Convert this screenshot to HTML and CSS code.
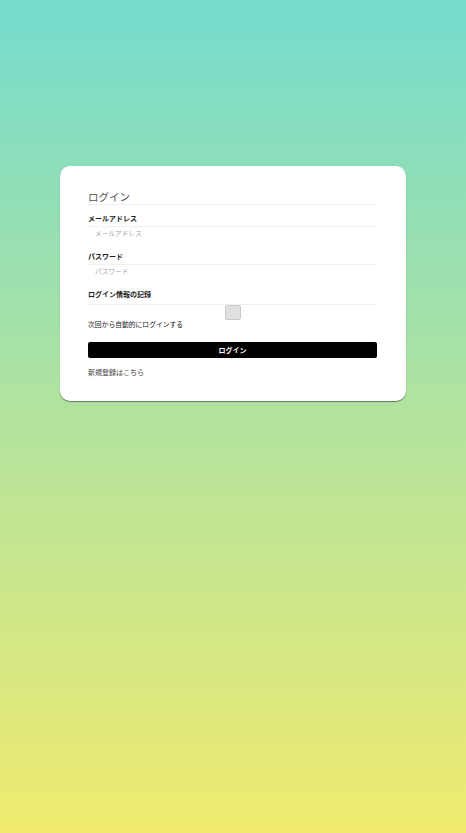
FILE: index.html
```html
<!DOCTYPE html>
<html lang="ja">
<head>
<meta charset="utf-8">
<title>ログイン</title>
<link rel="stylesheet" href="styles.css">
</head>
<body>
<main class="page">
  <form class="card">
    <h1 class="title">ログイン</h1>
    <label class="label" for="email">メールアドレス</label>
    <input class="field" id="email" type="email" placeholder="メールアドレス">
    <label class="label" for="password">パスワード</label>
    <input class="field" id="password" type="password" placeholder="パスワード">
    <div class="label label-remember">ログイン情報の記録</div>
    <div class="check-row"><input class="check" type="checkbox" id="remember"></div>
    <label class="check-text" for="remember">次回から自動的にログインする</label>
    <button class="btn" type="button">ログイン</button>
    <a class="link" href="#">新規登録はこちら</a>
  </form>
</main>
</body>
</html>
```

FILE: styles.css
```css
html, body {
  margin: 0;
  padding: 0;
}
body {
  min-height: 833px;
  background: linear-gradient(to bottom, #74dbcd 0%, #f0eb6f 100%);
  font-family: "Noto Sans CJK JP", "Noto Sans", sans-serif;
  color: #333;
}
.page {
  padding: 166px 60px 0 60px;
}
.card {
  display: flex;
  flex-direction: column;
  background: #fff;
  border-radius: 10px;
  box-shadow: 0 1px 1px rgba(0, 0, 0, 0.45);
  padding: 24px 29px 23px 28px;
}
.title {
  margin: 0;
  font-size: 10.5px;
  font-weight: 400;
  line-height: 14px;
  color: #555;
  border-bottom: 1px solid #f0f0f0;
}
.label {
  margin-top: 6px;
  font-size: 7px;
  font-weight: 700;
  line-height: 15px;
  color: #222;
  border-bottom: 1px solid #f0f0f0;
}
.field {
  border: 0;
  outline: none;
  padding: 0 0 0 7px;
  margin: 0;
  height: 13px;
  line-height: 13px;
  font-family: inherit;
  font-size: 6.7px;
  color: #333;
  background: transparent;
}
.field::placeholder {
  color: #a8a8a8;
}
.field + .label {
  margin-top: 9px;
}
.label-remember {
  padding-bottom: 2px;
}
.check-row {
  display: flex;
  justify-content: center;
  padding-left: 1px;
}
.check {
  appearance: none;
  -webkit-appearance: none;
  margin: 0;
  width: 16px;
  height: 15px;
  background: #e0e0e0;
  border: 1px solid #c8c8c8;
  border-radius: 2px;
  box-sizing: border-box;
}
.check-text {
  font-size: 6.8px;
  line-height: 9px;
  color: #222;
}
.btn {
  margin-top: 13px;
  height: 16px;
  padding: 0;
  border: 0;
  border-radius: 2px;
  background: #000;
  color: #fff;
  font-family: inherit;
  font-size: 7px;
  font-weight: 700;
  line-height: 16px;
}
.link {
  margin-top: 8px;
  font-size: 7px;
  line-height: 12px;
  color: #444;
  text-decoration: none;
}
```
